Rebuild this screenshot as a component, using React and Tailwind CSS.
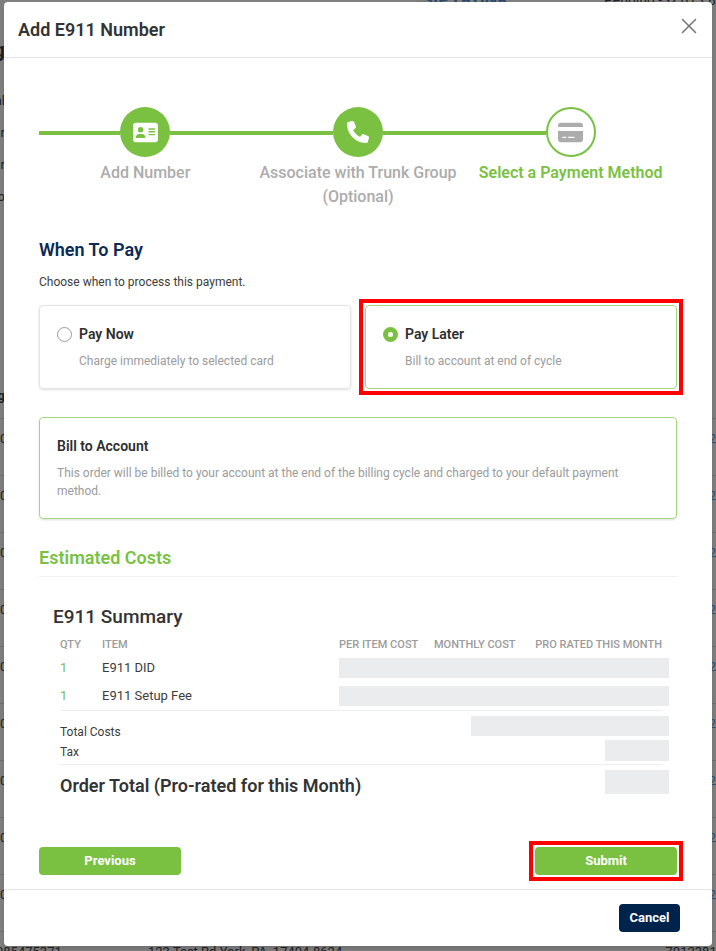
import React, { useState } from "react";
import { FaAddressCard, FaCreditCard, FaPhone } from "react-icons/fa6";
import { X } from "lucide-react";

const steps = [
  { label: "Add Number", icon: FaAddressCard, size: 25, done: true },
  {
    label: "Associate with Trunk Group (Optional)",
    icon: FaPhone,
    size: 22,
    done: true,
  },
  { label: "Select a Payment Method", icon: FaCreditCard, size: 25 },
];

const payOptions = [
  {
    id: "now",
    title: "Pay Now",
    description: "Charge immediately to selected card",
  },
  {
    id: "later",
    title: "Pay Later",
    description: "Bill to account at end of cycle",
  },
];

const items = [
  { qty: 1, name: "E911 DID" },
  { qty: 1, name: "E911 Setup Fee" },
];

const numberRows = [0, 1, 2, 3, 4, 5, 6, 7, 8];

const PageBehind = () => (
  <div
    aria-hidden="true"
    className="absolute inset-0 overflow-hidden bg-[#7f7f7f] text-[13px] leading-4 text-[#222]"
  >
    <div className="-mt-2 flex h-[426px] flex-col">
      <div className="flex justify-end gap-20">
        <span className="w-[102px] text-lg leading-4 font-bold text-[#2c4a6b]">
          SIPTRUNK
        </span>
        <span className="w-28 text-sm leading-4 whitespace-nowrap">
          Pending -$2,613.89
        </span>
      </div>
      <div className="flex w-[5px] flex-col items-end leading-8">
        <span className="mt-[26px] text-xl leading-8 font-bold">g</span>
        <span className="mt-[19px]">al</span>
        <span>r</span>
        <span>r</span>
        <span>to</span>
        <span className="mt-[167px] font-bold">g</span>
      </div>
    </div>
    {numberRows.map((row) => (
      <div
        key={row}
        className="flex h-[57px] justify-between border-t border-[#6f6f6f] pt-3"
      >
        <span>0</span>
        <span className="text-[#2a4f7d]">2</span>
      </div>
    ))}
    <div className="flex justify-between border-t border-[#6f6f6f] pt-3">
      <span className="-ml-1 w-[152px]">085475371</span>
      <span className="flex-1">123 Test Rd York, PA, 17404-8624</span>
      <span className="-mr-2">70123816</span>
    </div>
  </div>
);

const Step = ({ step, isLast }) => {
  const Icon = step.icon;
  return (
    <li className="flex flex-1 flex-col items-center">
      <div className="flex w-full items-start">
        <div className="mt-6 h-1 flex-1 bg-[#7ac142]" />
        <div
          className={
            step.done
              ? "flex size-[50px] items-center justify-center rounded-full bg-[#7ac142] text-white"
              : "flex size-[50px] items-center justify-center rounded-full border-2 border-[#7ac142] bg-white text-[#acacac]"
          }
        >
          <Icon size={step.size} />
        </div>
        <div className={isLast ? "flex-1" : "mt-6 h-1 flex-1 bg-[#7ac142]"} />
      </div>
      <div
        className={
          step.done
            ? "mt-1 px-1 text-center text-base font-medium text-[#acacac]"
            : "mt-1 text-center text-base font-semibold whitespace-nowrap text-[#7ac142]"
        }
      >
        {step.label}
      </div>
    </li>
  );
};

const PayOption = ({ option, selected, onSelect }) => (
  <div
    className={
      selected
        ? "flex-1 outline-4 outline-offset-2 outline-[#ff0000]"
        : "flex-1"
    }
  >
    <label
      htmlFor={`pay-${option.id}`}
      className={
        selected
          ? "flex gap-[7px] rounded border border-[#a5d67c] px-[17px] py-4"
          : "flex gap-[7px] rounded border border-[#e3e3e3] px-[17px] py-4 shadow-sm"
      }
    >
      <input
        type="radio"
        id={`pay-${option.id}`}
        name="pay"
        checked={selected}
        onChange={() => onSelect(option.id)}
        className="mt-[5px] size-[15px] shrink-0 appearance-none rounded-full border border-[#9b9b9b] bg-white checked:border-[5px] checked:border-[#7ac142]"
      />
      <span>
        <span className="block text-sm leading-6 font-semibold text-[#2e2e2e]">
          {option.title}
        </span>
        <span className="mt-1 block text-xs leading-[22px] text-[#9b9b9b]">
          {option.description}
        </span>
      </span>
    </label>
  </div>
);

const App = () => {
  const [payWhen, setPayWhen] = useState("later");

  return (
    <div className="relative min-h-screen overflow-hidden px-1 pt-0.5 pb-[5px] font-['Roboto',sans-serif] text-[#3c3c3c]">
      <PageBehind />

      <div
        role="dialog"
        aria-labelledby="dialog-title"
        className="relative rounded bg-white shadow-md"
      >
        <header className="flex h-[56px] items-center justify-between border-b border-[#e3e3e3] pr-[10px] pl-[14px]">
          <h1
            id="dialog-title"
            className="text-lg font-semibold text-[#333]"
          >
            Add E911 Number
          </h1>
          <button type="button" aria-label="Close" className="mb-2 text-[#777]">
            <X size={26} strokeWidth={1.5} />
          </button>
        </header>

        <div className="px-[35px] pt-[49px] pb-[14px]">
          <ol className="flex">
            {steps.map((step, index) => (
              <Step
                key={step.label}
                step={step}
                isLast={index === steps.length - 1}
              />
            ))}
          </ol>

          <h2 className="mt-[27px] text-lg leading-7 font-semibold text-[#0b2a55]">
            When To Pay
          </h2>
          <p className="mt-2 text-xs leading-5">
            Choose when to process this payment.
          </p>

          <div className="mt-[13px] flex gap-[14px]">
            {payOptions.map((option) => (
              <PayOption
                key={option.id}
                option={option}
                selected={payWhen === option.id}
                onSelect={setPayWhen}
              />
            ))}
          </div>

          <section className="mt-7 rounded border border-[#a5d67c] px-[17px] py-4 shadow-sm">
            <h3 className="text-sm leading-6 font-semibold text-[#2e2e2e]">
              Bill to Account
            </h3>
            <p className="mt-1.5 pb-0.5 text-xs leading-[18px] text-[#9b9b9b]">
              This order will be billed to your account at the end of the
              billing cycle and charged to your default payment method.
            </p>
          </section>

          <h2 className="mt-[25px] border-b border-[#f0f0f0] pb-1 text-lg leading-7 font-semibold text-[#7ac142]">
            Estimated Costs
          </h2>

          <section className="pr-[15px] pl-[14px]">
            <h3 className="mt-[26px] text-[19px] leading-7 font-medium text-[#333]">
              E911 Summary
            </h3>
            <div className="pl-[7px]">
              <table className="mt-[5px] w-full table-fixed text-left text-[13px]">
                <thead>
                  <tr className="h-[18px] text-[11px] leading-4 text-[#9b9b9b]">
                    <th className="w-[42px] font-medium">QTY</th>
                    <th className="font-medium">ITEM</th>
                    <th className="w-[95px] font-medium">PER ITEM COST</th>
                    <th className="w-[95px] font-medium">MONTHLY COST</th>
                    <th className="w-[133px] text-right font-medium">
                      PRO RATED THIS MONTH
                    </th>
                  </tr>
                </thead>
                <tbody>
                  {items.map((item) => (
                    <tr key={item.name} className="h-7">
                      <td className="text-[#7ac142]">{item.qty}</td>
                      <td>{item.name}</td>
                      <td colSpan={3}>
                        <div className="-mr-[7px] h-5 bg-[#ebecee]" />
                      </td>
                    </tr>
                  ))}
                </tbody>
              </table>

              <dl className="border-t border-[#ededed] text-xs">
                <div className="flex items-start justify-between pt-[5px]">
                  <dt className="mt-2 leading-4">Total Costs</dt>
                  <dd className="-mr-[7px] h-5 w-[198px] bg-[#ebecee]" />
                </div>
                <div className="flex items-start justify-between">
                  <dt className="leading-6">Tax</dt>
                  <dd className="-mr-[7px] h-[21px] w-16 bg-[#ebecee]" />
                </div>
                <div className="flex items-start justify-between border-t border-[#ededed] pt-[5px]">
                  <dt className="text-lg leading-8 font-semibold text-[#333]">
                    Order Total (Pro-rated for this Month)
                  </dt>
                  <dd className="-mr-[7px] h-6 w-16 bg-[#ebecee]" />
                </div>
              </dl>
            </div>
          </section>

          <div className="mt-[45px] flex justify-between text-[13px] font-bold text-white">
            <button
              type="button"
              className="h-7 w-[142px] rounded-sm bg-[#7ac142]"
            >
              Previous
            </button>
            <div className="outline-4 outline-offset-2 outline-[#ff0000]">
              <button
                type="submit"
                className="block h-7 w-[142px] rounded-sm bg-[#7ac142]"
              >
                Submit
              </button>
            </div>
          </div>
        </div>

        <footer className="flex justify-end border-t border-[#e3e3e3] px-8 py-[14px]">
          <button
            type="button"
            className="h-7 w-[61px] rounded-sm bg-[#00234b] text-[13px] font-bold text-white"
          >
            Cancel
          </button>
        </footer>
      </div>
    </div>
  );
};

export default App;
